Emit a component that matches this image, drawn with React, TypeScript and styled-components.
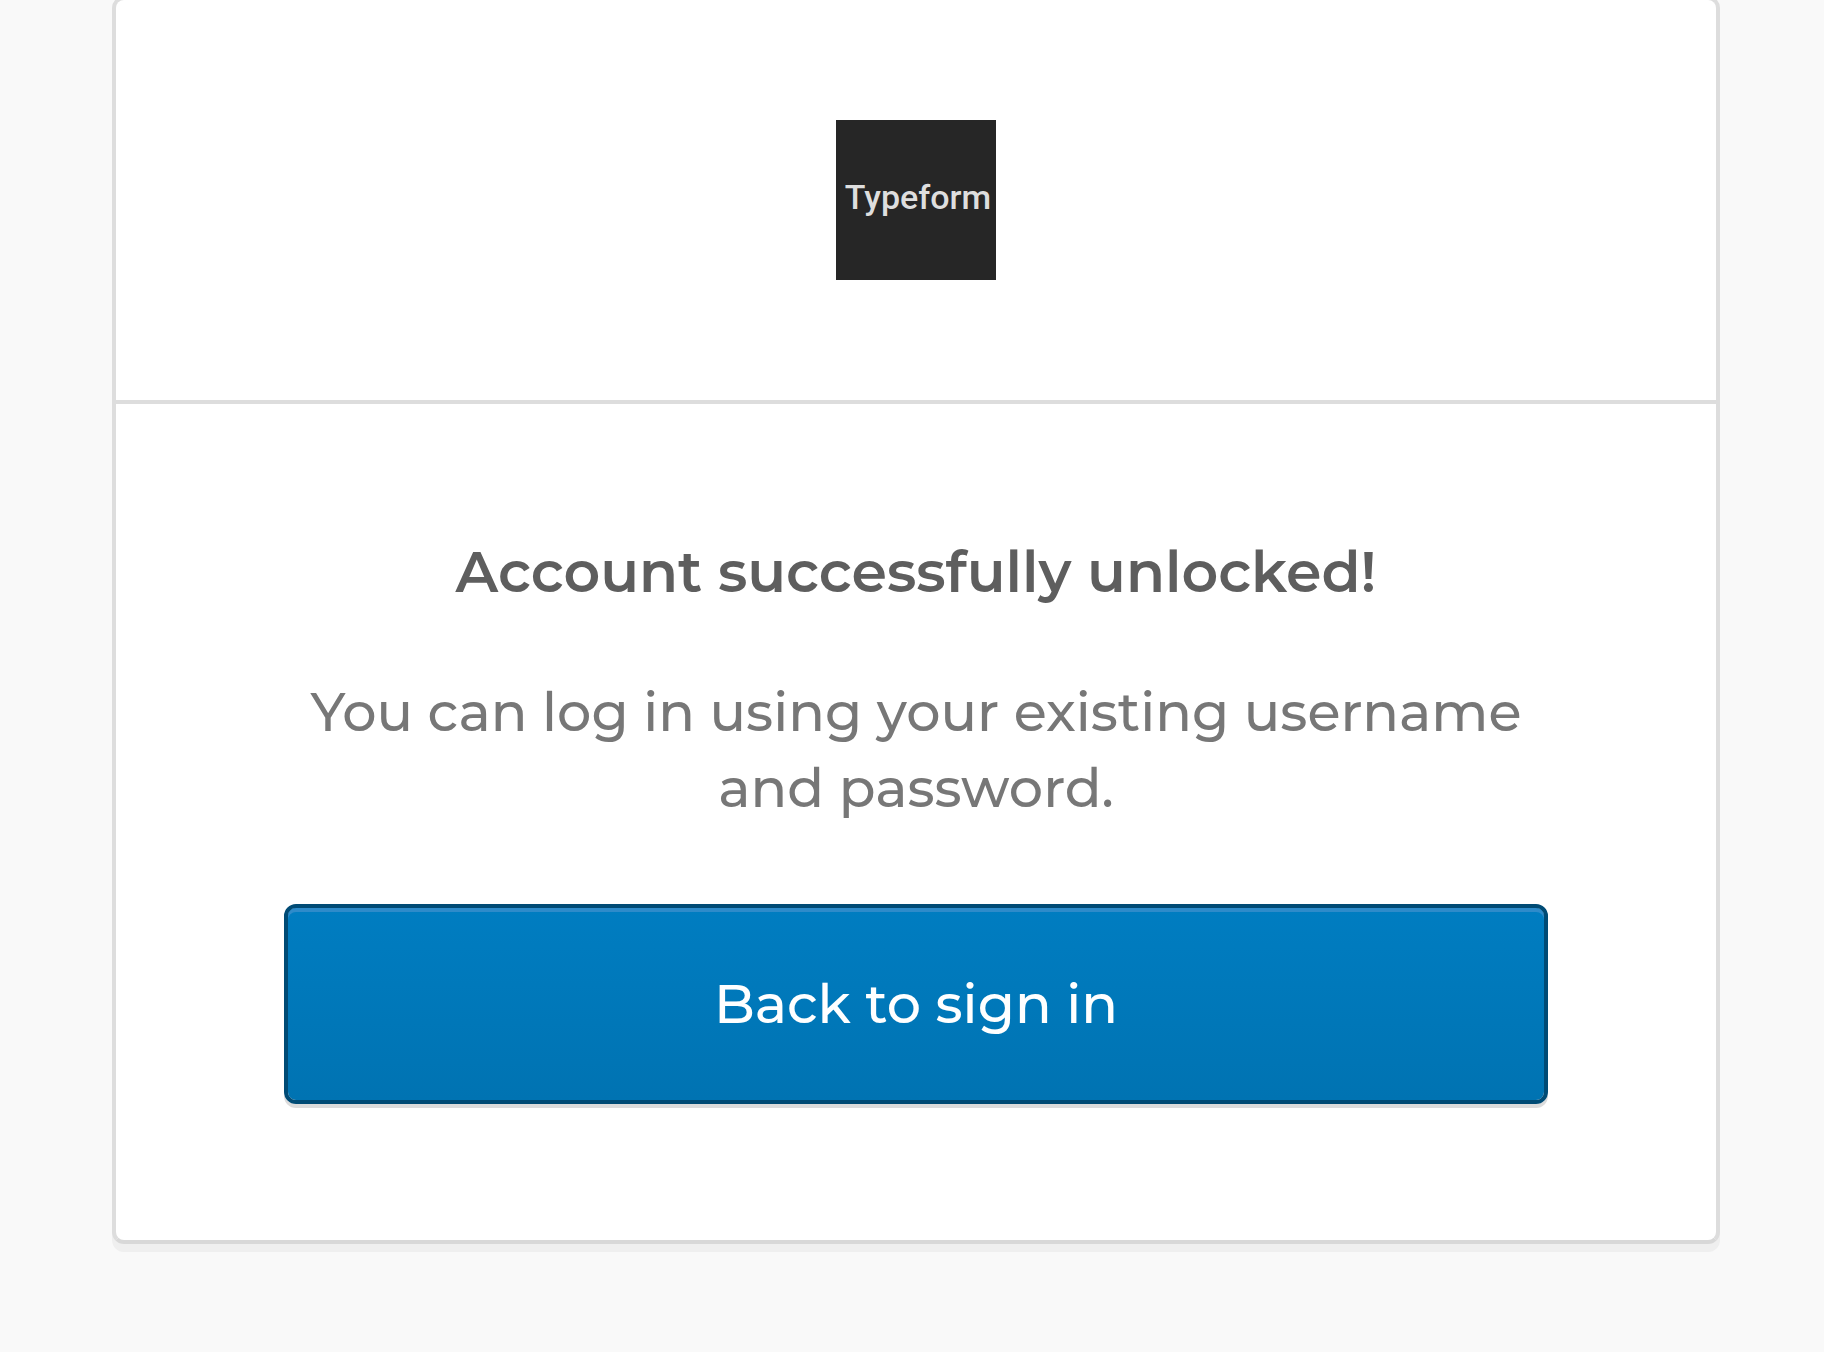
import React from "react";
import styled, { createGlobalStyle } from "styled-components";

const GlobalStyle = createGlobalStyle`
  *, *::before, *::after { box-sizing: border-box; }
  body {
    margin: 0;
    background: #f9f9f9;
    font-family: Montserrat, Inter, "Liberation Sans", sans-serif;
    -webkit-font-smoothing: antialiased;
  }
`;

const Page = styled.main`
  display: flow-root;
  min-height: 100vh;
  padding: 0 104px 0 112px;
  overflow: hidden;
`;

const Card = styled.section`
  margin-top: -4px;
  background: #fff;
  border: 4px solid #ddd;
  border-bottom-color: #d8d8d8;
  border-radius: 12px;
  box-shadow: 0 8px 0 #efefef;
`;

const CardHeader = styled.header`
  display: flex;
  justify-content: center;
  padding: 120px 0;
  border-bottom: 4px solid #ddd;
`;

const Logo = styled.svg`
  display: block;
  width: 160px;
  height: 160px;
`;

const CardBody = styled.div`
  display: flex;
  flex-direction: column;
  padding: 132px 168px 136px;
  text-align: center;
`;

const Title = styled.h1`
  margin: 0 0 66px;
  color: #5e5e5e;
  font-size: 57px;
  line-height: 72px;
  font-weight: 600;
`;

const Message = styled.p`
  margin: 0 0 78px;
  color: #777;
  font-size: 54px;
  line-height: 76px;
  font-weight: 500;
`;

const PrimaryButton = styled.button`
  width: 100%;
  height: 200px;
  padding: 0;
  border: 4px solid #004b75;
  border-radius: 12px;
  background: linear-gradient(180deg, #007dc1, #0073b2) padding-box;
  box-shadow: 0 4px 0 #dcdcdc, inset 0 4px 0 #2e8bca;
  color: #fff;
  font-family: inherit;
  font-size: 54px;
  line-height: 76px;
  font-weight: 500;
  cursor: pointer;
`;

export default function App() {
  return (
    <>
      <GlobalStyle />
      <Page>
        <Card>
          <CardHeader>
            <Logo viewBox="0 0 160 160" role="img" aria-label="Typeform">
              <rect width="160" height="160" fill="#262626" />
              <text
                x="82"
                y="89"
                textAnchor="middle"
                fill="#dedede"
                fontFamily="Roboto, sans-serif"
                fontSize="34"
                fontWeight="500"
              >
                Typeform
              </text>
            </Logo>
          </CardHeader>
          <CardBody>
            <Title>Account successfully unlocked!</Title>
            <Message>You can log in using your existing username and password.</Message>
            <PrimaryButton type="button">Back to sign in</PrimaryButton>
          </CardBody>
        </Card>
      </Page>
    </>
  );
}
